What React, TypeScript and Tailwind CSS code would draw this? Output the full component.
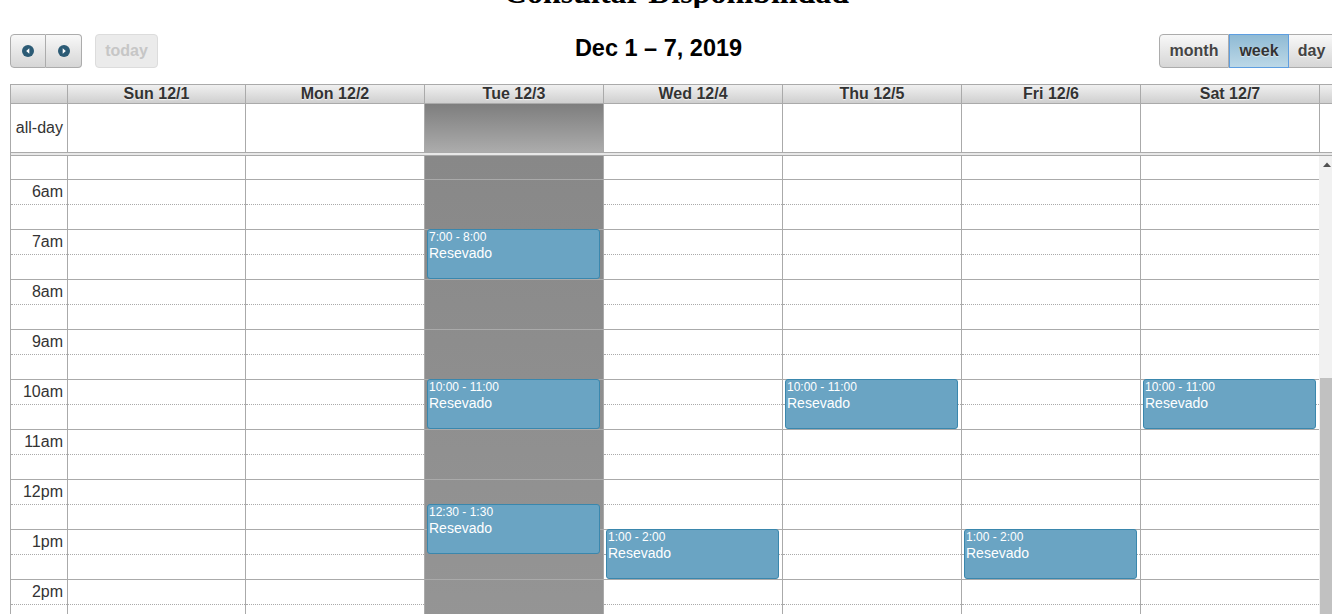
import React from "react";

const days = ["Sun 12/1", "Mon 12/2", "Tue 12/3", "Wed 12/4", "Thu 12/5", "Fri 12/6", "Sat 12/7"];
const TODAY = 2;

type Ev = { day: number; start: number; end: number; label: string };
const events: Ev[] = [
  { day: 2, start: 7, end: 8, label: "7:00 - 8:00" },
  { day: 2, start: 10, end: 11, label: "10:00 - 11:00" },
  { day: 4, start: 10, end: 11, label: "10:00 - 11:00" },
  { day: 6, start: 10, end: 11, label: "10:00 - 11:00" },
  { day: 2, start: 12.5, end: 13.5, label: "12:30 - 1:30" },
  { day: 3, start: 13, end: 14, label: "1:00 - 2:00" },
  { day: 5, start: 13, end: 14, label: "1:00 - 2:00" },
];

type Slot = { label: string; kind: "first" | "hour" | "half" };
const slots: Slot[] = [{ label: "", kind: "first" }];
const hourLabels = ["6am", "7am", "8am", "9am", "10am", "11am", "12pm", "1pm", "2pm", "3pm"];
hourLabels.forEach((l) => {
  slots.push({ label: l, kind: "hour" });
  slots.push({ label: "", kind: "half" });
});

const COLS = "grid grid-cols-[56px_178px_179px_179px_179px_179px_179px_179px_16px]";

const btn =
  "h-[34px] px-[10px] text-[16px] font-bold text-[#444] border border-[#acacac] bg-gradient-to-b from-[#f8f8f8] to-[#d6d6d6] [text-shadow:0_1px_1px_rgba(255,255,255,0.75)] flex items-center justify-center";

function Arrow({ dir }: { dir: "l" | "r" }) {
  return (
    <svg width="12" height="12" viewBox="0 0 12 12">
      <circle cx="6" cy="6" r="6" fill="#2c5b75" />
      {dir === "l" ? (
        <path d="M7.3 3.3 L4.2 6 L7.3 8.7 Z" fill="#fff" />
      ) : (
        <path d="M4.7 3.3 L7.8 6 L4.7 8.7 Z" fill="#fff" />
      )}
    </svg>
  );
}

function SlotCell({ s, today, axis }: { s: Slot; today?: boolean; axis?: boolean }) {
  if (s.kind === "first") return <div className="h-[23px]" />;
  const cls =
    s.kind === "hour"
      ? "h-[25px] border-t border-solid border-[#aaa]"
      : today
      ? "h-[25px] border-t border-transparent"
      : "h-[25px] border-t border-dotted border-[#aaa]";
  return (
    <div className={cls + (axis ? " flex items-center justify-end pr-[4px] text-[16px] text-[#333]" : "")}>
      {axis ? s.label : null}
    </div>
  );
}

export default function App() {
  return (
    <div
      className="w-[1332px] h-[614px] overflow-hidden bg-white"
      style={{ fontFamily: '"Liberation Sans", Arial, sans-serif' }}
    >
      <div className="ml-[10px] w-[1325px]">
        {/* Page title, scrolled mostly out of view */}
        <div className="h-[8px] overflow-hidden flex items-end justify-center pl-[8px]">
          <h1
            className="text-[32px] leading-[32px] font-bold text-black whitespace-nowrap"
            style={{ fontFamily: '"Liberation Serif", "Times New Roman", serif' }}
          >
            Consultar Disponibilidad
          </h1>
        </div>

        {/* Toolbar */}
        <div className="mt-[26px] flex items-center h-[34px]">
          <div className="flex items-center">
            <div className="flex">
              <button className={btn + " w-[36px] px-0 rounded-l-[4px]"}>
                <Arrow dir="l" />
              </button>
              <button className={btn + " w-[36px] px-0 rounded-r-[4px] border-l-0"}>
                <Arrow dir="r" />
              </button>
            </div>
            <button className="ml-[13px] h-[34px] w-[63px] rounded-[4px] border border-[#dcdcdc] bg-[#ebebeb] text-[16px] font-bold text-[#c6c6c6]">
              today
            </button>
          </div>
          <div className="flex-1 text-center text-[23.5px] leading-[28px] font-bold text-black mb-[6px]">
            Dec 1 – 7, 2019
          </div>
          <div className="flex">
            <button className={btn + " w-[70px] rounded-l-[4px]"}>month</button>
            <button className="h-[34px] w-[60px] text-[16px] font-bold text-[#333] border border-[#5e9ee0] bg-gradient-to-b from-[#8fbad4] to-[#bcd8e7] [text-shadow:0_1px_1px_rgba(255,255,255,0.6)]">
              week
            </button>
            <button className={btn + " w-[46px] rounded-r-[4px] border-l-0"}>day</button>
          </div>
        </div>

        {/* Calendar */}
        <div className="mt-[16px] border-l border-[#aaa]">
          {/* header */}
          <div className={COLS + " h-[20px] border-y border-[#aaa] bg-gradient-to-b from-[#f0f0f0] to-[#cfcfcf]"}>
            <div />
            {days.map((d) => (
              <div
                key={d}
                className="border-l border-[#aaa] text-center text-[16px] leading-[18px] font-bold text-[#333] [text-shadow:0_1px_1px_rgba(255,255,255,0.7)]"
              >
                {d}
              </div>
            ))}
            <div className="border-l border-[#aaa]" />
          </div>

          {/* all-day */}
          <div className={COLS + " h-[48px]"}>
            <div className="flex items-center justify-end pr-[4px] text-[16px] text-[#333]">all-day</div>
            {days.map((d, i) => (
              <div
                key={d}
                className={
                  "border-l border-[#aaa]" +
                  (i === TODAY ? " bg-gradient-to-b from-[#7e7e7e] to-[#acacac]" : "")
                }
              />
            ))}
            <div className="border-l border-[#aaa]" />
          </div>

          {/* divider */}
          <div className="h-[4px] border-y border-[#aaa] bg-[#e8e8e8]" />

          {/* time grid */}
          <div className={COLS}>
            <div className="flex flex-col">
              {slots.map((s, k) => (
                <SlotCell key={k} s={s} axis />
              ))}
            </div>
            {days.map((d, i) => (
              <div
                key={d}
                className={
                  "relative flex flex-col border-l border-[#aaa]" +
                  (i === TODAY ? " bg-gradient-to-b from-[#888888] to-[#999999]" : "")
                }
              >
                {slots.map((s, k) => (
                  <SlotCell key={k} s={s} today={i === TODAY} />
                ))}
                {events
                  .filter((e) => e.day === i)
                  .map((e, k) => (
                    <div
                      key={k}
                      className="absolute left-[2px] right-[3px] rounded-[3px] border border-[#3a87ad] bg-[#6aa4c3] px-[1px] text-white overflow-hidden"
                      style={{ top: 23 + 50 * (e.start - 6), height: 50 * (e.end - e.start) }}
                    >
                      <div className="text-[12px] leading-[12px] pt-[1px]">{e.label}</div>
                      <div className="text-[14px] leading-[20px]">Resevado</div>
                    </div>
                  ))}
              </div>
            ))}
            <div className="flex flex-col bg-[#f1f1f1]">
              <div className="h-[17px] flex items-center justify-center">
                <svg width="8" height="5" viewBox="0 0 8 5">
                  <path d="M0 5 L4 0.5 L8 5 Z" fill="#505050" />
                </svg>
              </div>
              <div className="mt-[205px] ml-[1px] mr-[2px] h-[400px] bg-[#c1c1c1]" />
            </div>
          </div>
        </div>
      </div>
    </div>
  );
}
